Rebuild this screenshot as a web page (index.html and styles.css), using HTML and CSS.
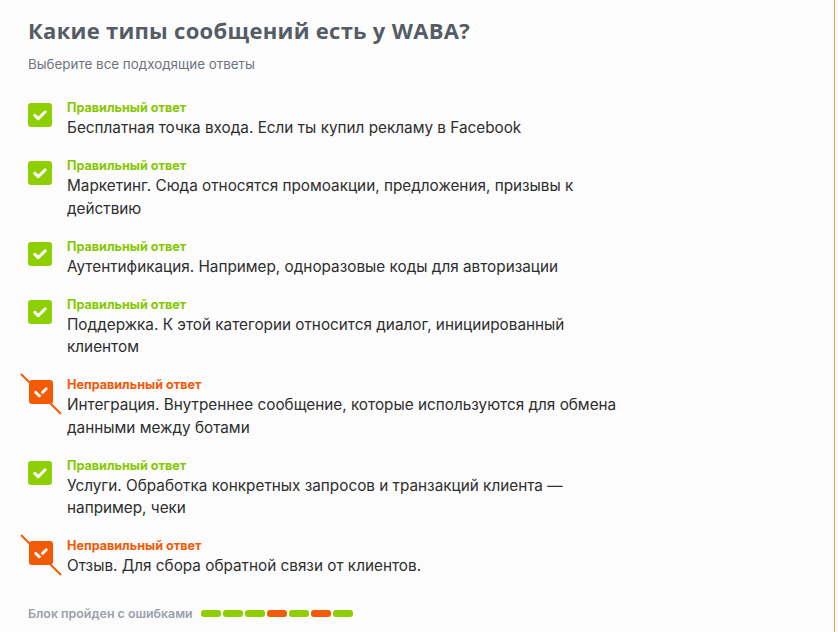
FILE: index.html
```html
<!DOCTYPE html>
<html lang="ru">
<head>
<meta charset="utf-8">
<link rel="stylesheet" href="styles.css">
</head>
<body>
<div class="app">
  <main class="content">
    <h1 class="title">Какие типы сообщений есть у WABA?</h1>
    <p class="hint">Выберите все подходящие ответы</p>
    <ul class="answers">
      <li class="answer ok">
        <span class="box"><svg viewBox="0 0 24 24" width="24" height="24"><path d="M6.8 12.4l3.4 3.3L17.2 8.8" fill="none" stroke="#fff" stroke-width="3" stroke-linecap="round" stroke-linejoin="round"/></svg></span>
        <div class="body"><div class="status">Правильный ответ</div><div class="text">Бесплатная точка входа. Если ты купил рекламу в Facebook</div></div>
      </li>
      <li class="answer ok">
        <span class="box"><svg viewBox="0 0 24 24" width="24" height="24"><path d="M6.8 12.4l3.4 3.3L17.2 8.8" fill="none" stroke="#fff" stroke-width="3" stroke-linecap="round" stroke-linejoin="round"/></svg></span>
        <div class="body"><div class="status">Правильный ответ</div><div class="text">Маркетинг. Сюда относятся промоакции, предложения, призывы к<br>действию</div></div>
      </li>
      <li class="answer ok">
        <span class="box"><svg viewBox="0 0 24 24" width="24" height="24"><path d="M6.8 12.4l3.4 3.3L17.2 8.8" fill="none" stroke="#fff" stroke-width="3" stroke-linecap="round" stroke-linejoin="round"/></svg></span>
        <div class="body"><div class="status">Правильный ответ</div><div class="text">Аутентификация. Например, одноразовые коды для авторизации</div></div>
      </li>
      <li class="answer ok">
        <span class="box"><svg viewBox="0 0 24 24" width="24" height="24"><path d="M6.8 12.4l3.4 3.3L17.2 8.8" fill="none" stroke="#fff" stroke-width="3" stroke-linecap="round" stroke-linejoin="round"/></svg></span>
        <div class="body"><div class="status">Правильный ответ</div><div class="text">Поддержка. К этой категории относится диалог, инициированный<br>клиентом</div></div>
      </li>
      <li class="answer bad">
        <span class="box"><svg class="strike" viewBox="0 0 44 44" width="44" height="44"><line x1="2" y1="2" x2="42" y2="42" stroke="#f25a05" stroke-width="2"/></svg><svg viewBox="0 0 24 24" width="24" height="24"><path d="M6.8 12.4l3.4 3.3L17.2 8.8" fill="none" stroke="#fff" stroke-width="3" stroke-linecap="round" stroke-linejoin="round"/></svg></span>
        <div class="body"><div class="status">Неправильный ответ</div><div class="text">Интеграция. Внутреннее сообщение, которые используются для обмена<br>данными между ботами</div></div>
      </li>
      <li class="answer ok">
        <span class="box"><svg viewBox="0 0 24 24" width="24" height="24"><path d="M6.8 12.4l3.4 3.3L17.2 8.8" fill="none" stroke="#fff" stroke-width="3" stroke-linecap="round" stroke-linejoin="round"/></svg></span>
        <div class="body"><div class="status">Правильный ответ</div><div class="text">Услуги. Обработка конкретных запросов и транзакций клиента —<br>например, чеки</div></div>
      </li>
      <li class="answer bad">
        <span class="box"><svg class="strike" viewBox="0 0 44 44" width="44" height="44"><line x1="2" y1="2" x2="42" y2="42" stroke="#f25a05" stroke-width="2"/></svg><svg viewBox="0 0 24 24" width="24" height="24"><path d="M6.8 12.4l3.4 3.3L17.2 8.8" fill="none" stroke="#fff" stroke-width="3" stroke-linecap="round" stroke-linejoin="round"/></svg></span>
        <div class="body"><div class="status">Неправильный ответ</div><div class="text">Отзыв. Для сбора обратной связи от клиентов.</div></div>
      </li>
    </ul>
    <div class="result">
      <span class="result-text">Блок пройден с ошибками</span>
      <span class="progress">
        <i class="seg g"></i><i class="seg g"></i><i class="seg g"></i><i class="seg r"></i><i class="seg g"></i><i class="seg r"></i><i class="seg g"></i>
      </span>
    </div>
  </main>
  <div class="rail"></div>
</div>
</body>
</html>
```
FILE: styles.css
```css
* { box-sizing: border-box; }
html, body { margin: 0; padding: 0; }
body {
  background: #fcfcfc;
  font-family: Inter, "Noto Sans", sans-serif;
  color: #2b2b2b;
}
.app {
  display: flex;
  height: 632px;
  overflow: hidden;
}
.content {
  flex: 1;
  padding: 15px 28px 0 28px;
}
.rail {
  width: 4px;
  border-left: 1px solid #f2a437;
  background: #f3f6fb;
}
.title {
  margin: 0;
  font-family: "Open Sans", sans-serif;
  font-weight: 700;
  font-size: 22px;
  letter-spacing: 0.28px;
  line-height: 30px;
  color: #565c66;
}
.hint {
  margin: 10px 0 0;
  font-size: 13.4px;
  line-height: 18px;
  color: #6f747c;
}
.answers {
  list-style: none;
  margin: 26px 0 0;
  padding: 0;
  display: flex;
  flex-direction: column;
  gap: 17.5px;
}
.answer {
  display: flex;
  gap: 15px;
  align-items: flex-start;
}
.box {
  position: relative;
  flex: none;
  width: 24px;
  height: 24px;
  margin-top: 4px;
  border-radius: 3px;
  display: flex;
}
.ok .box { background: #8dcf00; }
.bad .box { background: #f25a05; margin-left: 1px; margin-right: -1px; }
.strike {
  position: absolute;
  left: -10px;
  top: -8px;
}
.body { display: flex; flex-direction: column; }
.status {
  font-size: 12.6px;
  font-weight: 700;
  line-height: 18px;
}
.ok .status { color: #86c800; }
.bad .status { color: #f25a05; }
.text {
  font-size: 15.3px;
  line-height: 22.5px;
  color: #2e2e2e;
  white-space: nowrap;
}
.result {
  display: flex;
  align-items: center;
  gap: 8px;
  margin-top: 28px;
}
.result-text {
  font-size: 12.4px;
  font-weight: 600;
  color: #9aa1aa;
}
.progress {
  display: flex;
  gap: 2px;
}
.seg {
  display: block;
  width: 20px;
  height: 7px;
  border-radius: 3px;
}
.seg.g { background: #8dcf00; }
.seg.r { background: #f25a05; }
```
